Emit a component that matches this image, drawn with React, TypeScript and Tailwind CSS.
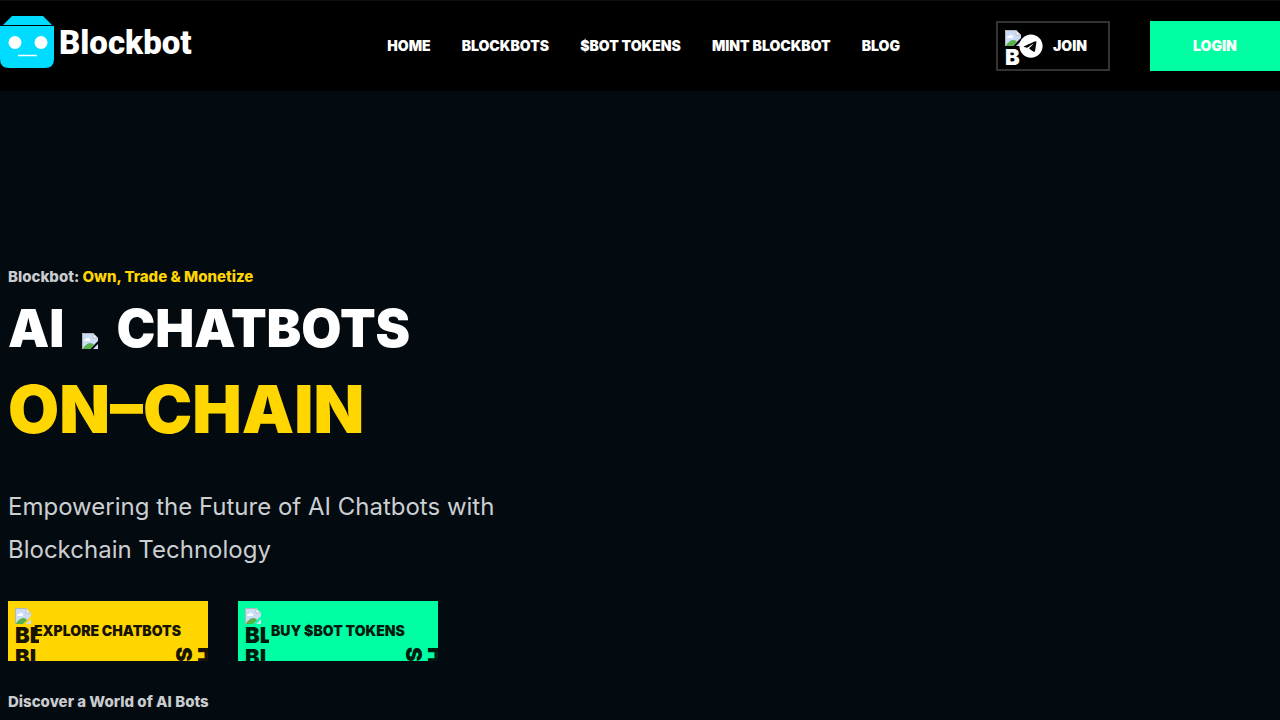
import { FaTelegram } from "react-icons/fa6";

const navLinks = [
  { label: "HOME", href: "#home" },
  { label: "BLOCKBOTS", href: "#blockbots" },
  { label: "$BOT TOKENS", href: "#tokens" },
  { label: "MINT BLOCKBOT", href: "#mint" },
  { label: "BLOG", href: "#blog" },
];

export default function App() {
  return (
    <div className="min-h-screen bg-[#030a10] font-['Inter',sans-serif] text-white">
      <Header />
      <Hero />
    </div>
  );
}

function Header() {
  return (
    <header className="flex h-[91px] items-center border-t border-[#0b0f12] bg-black">
      <a href="#home" className="flex items-center gap-1 pb-2">
        <RobotLogo />
        <span className="pt-0.5 font-['Roboto',sans-serif] text-[33px] leading-10 font-black">
          Blockbot
        </span>
      </a>

      <nav className="mr-24 ml-auto flex gap-[31px]">
        {navLinks.map((link) => (
          <a key={link.href} href={link.href} className="text-sm font-black whitespace-nowrap">
            {link.label}
          </a>
        ))}
      </nav>

      <div className="flex gap-10">
        <a
          href="#join"
          className="relative flex h-[50px] w-[114px] items-center gap-[10px] border-2 border-[#333] pl-[21px]"
        >
          {/* Button shape image and its alt text */}
          <span className="absolute top-[7px] left-[7px] w-4 overflow-hidden text-[22px] leading-[22px] font-black">
            <BrokenImage />
            <span className="block">B</span>
          </span>
          <FaTelegram className="relative size-6" />
          <span className="text-sm font-black">JOIN</span>
        </a>
        <button className="h-[50px] w-[130px] bg-[#00ffa3] text-sm font-black">LOGIN</button>
      </div>
    </header>
  );
}

function Hero() {
  return (
    <main className="px-2 pt-[176px]">
      <p className="text-[15px] leading-5 font-extrabold text-[#c9cccf]">
        Blockbot: <span className="text-[#ffd600]">Own, Trade &amp; Monetize</span>
      </p>
      <h1 className="pt-0.5 font-black">
        <span className="flex h-20 items-center text-[52px] leading-20">
          AI
          <span className="mx-[18px] pt-6">
            <BrokenImage />
          </span>
          CHATBOTS
        </span>
        <span className="block text-[66px] leading-20 text-[#ffd600]">ON–CHAIN</span>
      </h1>
      <p className="mt-9 max-w-[520px] text-2xl leading-[43px] text-[#cccfd2]">
        Empowering the Future of AI Chatbots with Blockchain Technology
      </p>
      <div className="mt-[30px] flex gap-[30px]">
        <ShapeButton label="EXPLORE CHATBOTS" className="bg-[#ffd600] pl-[26px] text-[#171300]" />
        <ShapeButton label="BUY $BOT TOKENS" className="bg-[#00ffa3] pl-[33px] text-[#001a10]" />
      </div>
      <p className="mt-[31px] text-[15px] leading-5 font-extrabold text-[#c9cccf]">
        Discover a World of AI Bots
      </p>
    </main>
  );
}

function ShapeButton({ label, className }: { label: string; className: string }) {
  return (
    <button
      className={`relative h-[60px] w-[200px] overflow-hidden text-left text-sm font-black whitespace-nowrap ${className}`}
    >
      {/* Left shape */}
      <span className="absolute top-[7px] left-[7px] w-6 overflow-hidden text-[22px] leading-[22px] font-black">
        <BrokenImage />
        <span className="block">BL</span>
        <span className="block">BL</span>
      </span>
      {/* Right shape, its text runs downwards */}
      <span className="absolute top-[46px] left-[165px] text-[22px] leading-[22px] font-black [writing-mode:vertical-rl]">
        <span className="block">H</span>
        <span className="block">S</span>
      </span>
      <span className="relative">{label}</span>
    </button>
  );
}

function RobotLogo() {
  return (
    <svg viewBox="0 0 55 53" className="h-[53px] w-[55px]" aria-hidden="true">
      <path d="M12 0H43L52 9H3Z" fill="#00dcff" />
      <path d="M0 10H54V43Q54 52 45 52H9Q0 52 0 43Z" fill="#00dcff" />
      <circle cx="15" cy="26.500" r="6.500" fill="#fff" />
      <circle cx="41" cy="26.500" r="6.500" fill="#fff" />
      <path d="M18 39.500H37" stroke="#fff" strokeWidth="1.500" />
    </svg>
  );
}

function BrokenImage() {
  return (
    <svg viewBox="0 0 16 16" className="block size-4" aria-hidden="true">
      <path d="M0 0H11L16 5V8L8 16H0Z" fill="#cbdcf7" />
      <path d="M2 8Q2 6 4 6Q5 4 7 5Q9 6 8 8Z" fill="#fff" />
      <path d="M1 15.500Q4 10.500 8 10Q11 10 12 12L8 16H1Z" fill="#5cb04a" />
      <path d="M.5 16V.5H11" fill="none" stroke="#b5b5b5" />
      <path d="M11 .5V5H15.500Z" fill="#fff" stroke="#b5b5b5" strokeWidth=".8" />
      <path d="M16 11V16H11Z" fill="#cbdcf7" />
    </svg>
  );
}
